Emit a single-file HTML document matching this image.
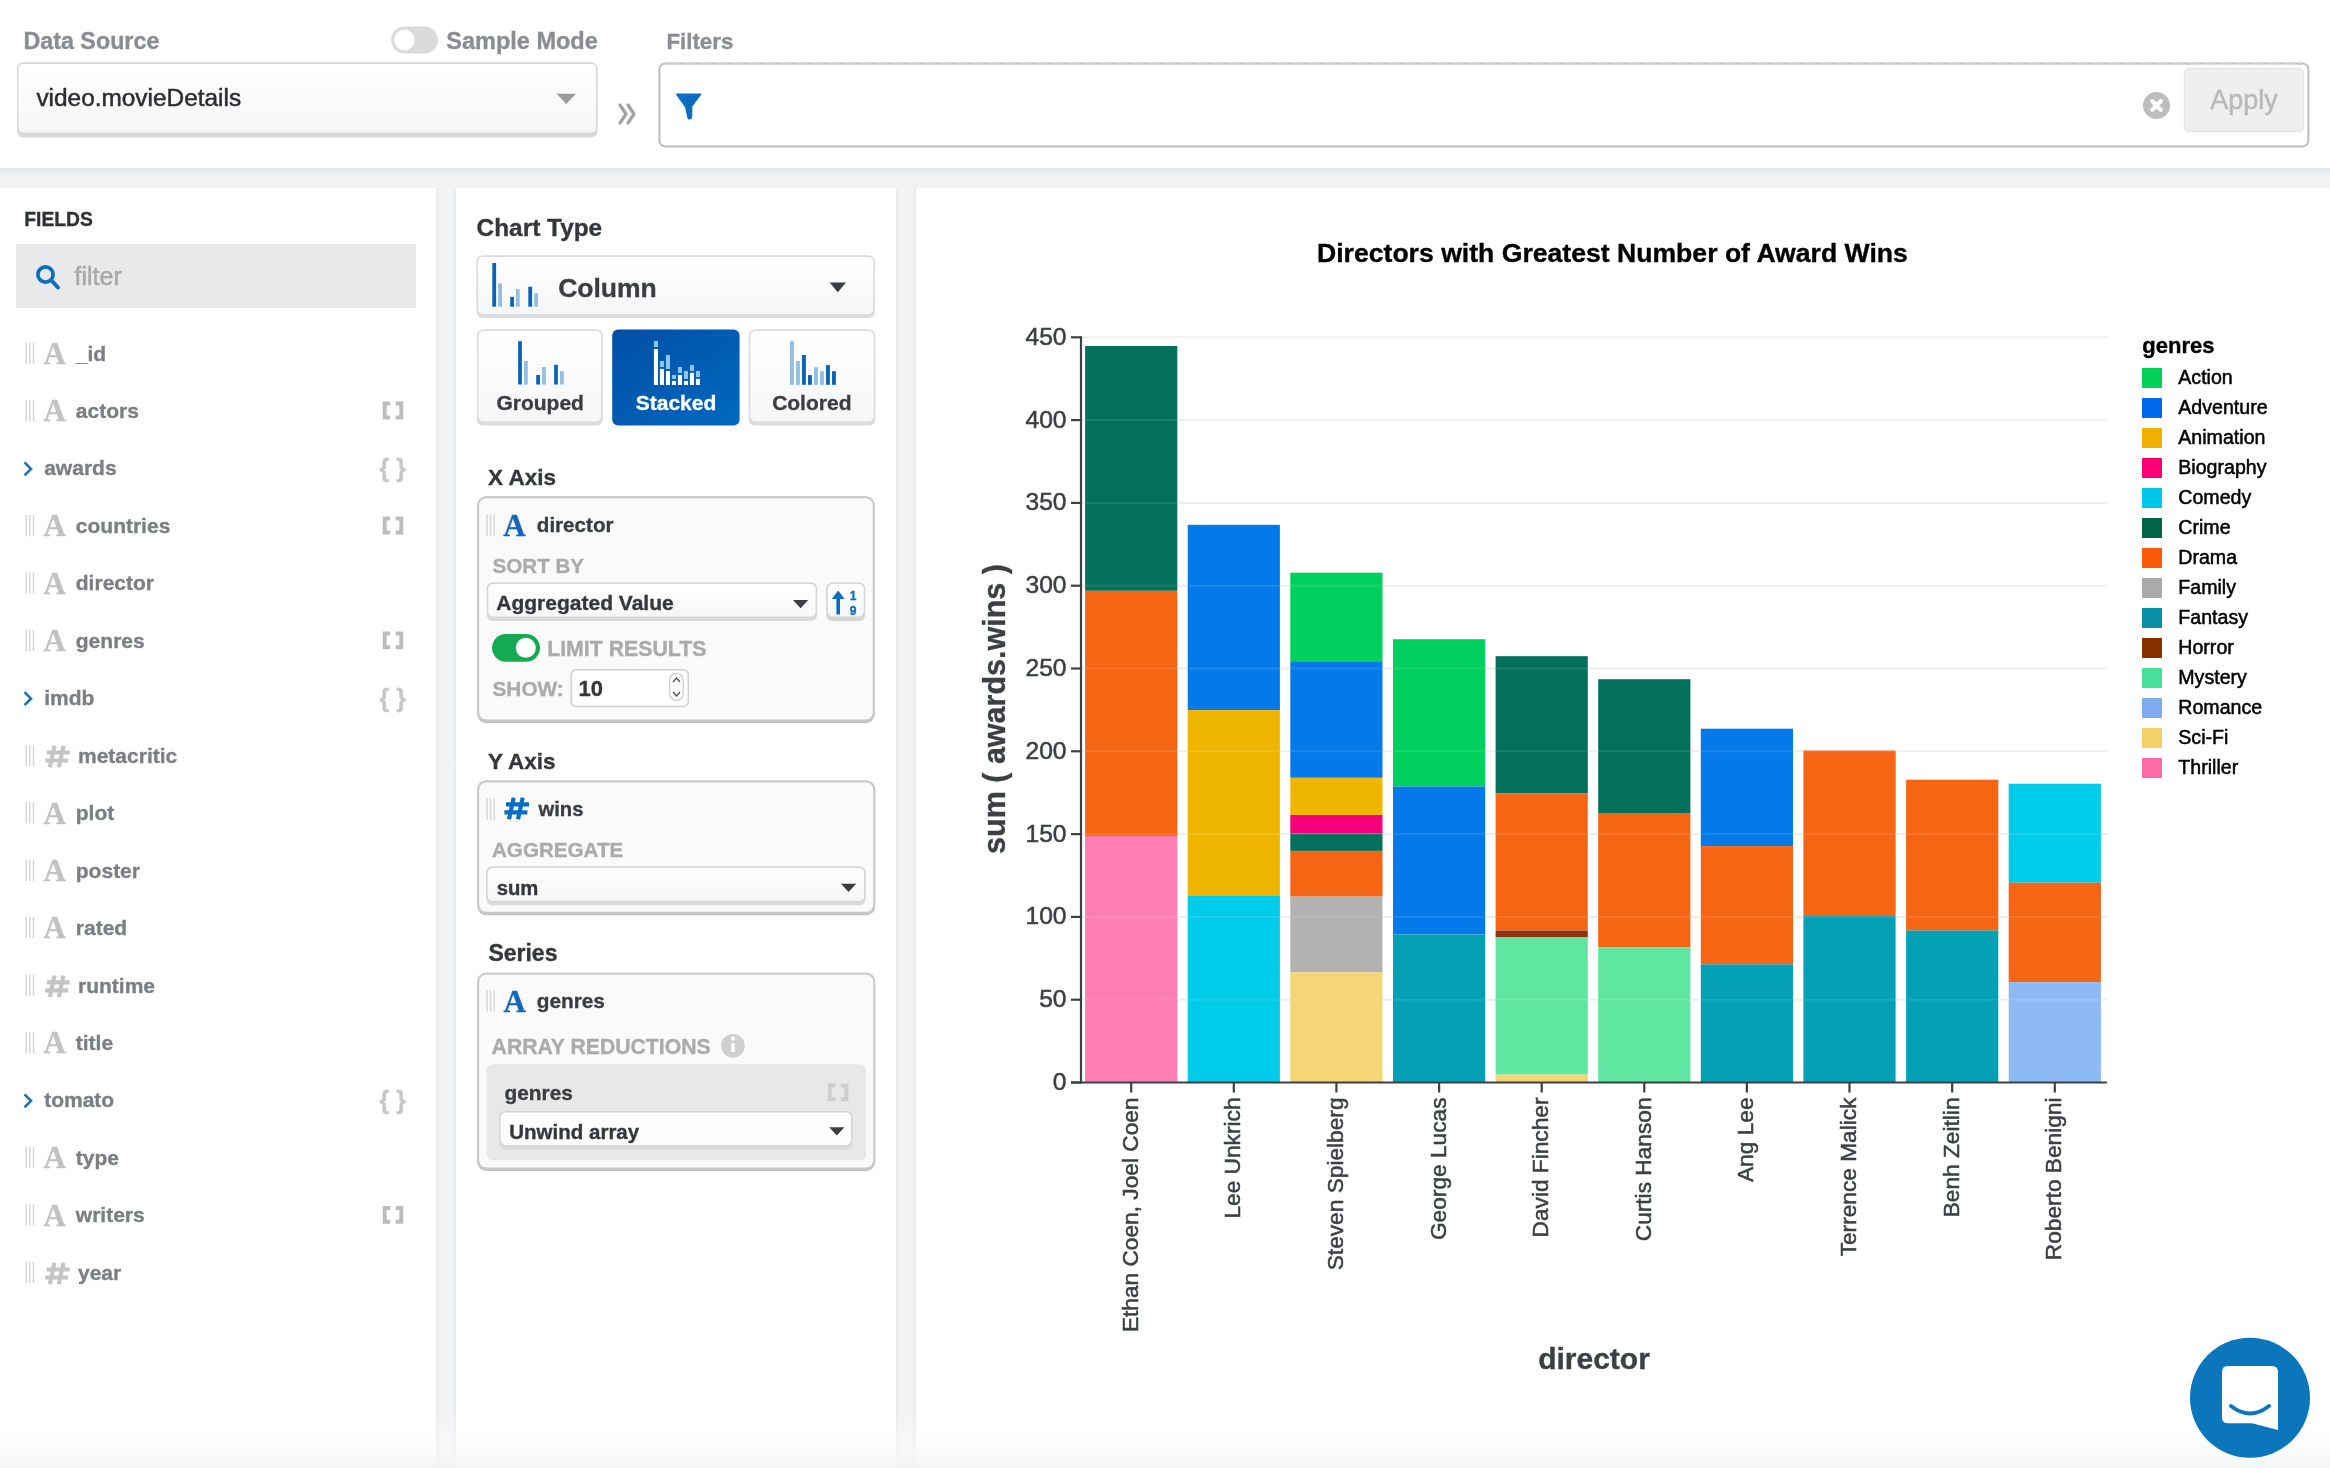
<!DOCTYPE html>
<html><head><meta charset="utf-8"><title>Charts</title>
<style>html,body{margin:0;padding:0;width:2330px;height:1468px;overflow:hidden;background:#fff;position:relative}</style>
</head><body>
<svg width="2330" height="1468" viewBox="0 0 2330 1468" style="position:absolute;left:0;top:0;will-change:transform">
<defs>
<linearGradient id="selg" x1="0" y1="0" x2="0" y2="1"><stop offset="0" stop-color="#ffffff"/><stop offset="1" stop-color="#f5f6f7"/></linearGradient>
<linearGradient id="blueg" x1="0" y1="0" x2="1" y2="1"><stop offset="0" stop-color="#0050a5"/><stop offset="1" stop-color="#0068c0"/></linearGradient>
<linearGradient id="band" x1="0" y1="0" x2="0" y2="1"><stop offset="0" stop-color="#e2e4e5"/><stop offset="0.22" stop-color="#e8eaeb"/><stop offset="0.3" stop-color="#eff1f2"/><stop offset="1" stop-color="#f2f3f4"/></linearGradient>
<linearGradient id="bot" x1="0" y1="0" x2="0" y2="1"><stop offset="0" stop-color="#ffffff" stop-opacity="0"/><stop offset="1" stop-color="#f3f4f4" stop-opacity="1"/></linearGradient>
<linearGradient id="gap" x1="0" y1="0" x2="1" y2="0"><stop offset="0" stop-color="#e9eaec"/><stop offset="0.22" stop-color="#f2f3f5"/><stop offset="0.75" stop-color="#f3f4f6"/><stop offset="1" stop-color="#eaebed"/></linearGradient>
</defs>
<rect x="0" y="0" width="2330" height="1468" fill="#f1f2f4"/>
<rect x="0" y="0" width="2330" height="168" fill="#ffffff"/>
<rect x="0" y="168" width="2330" height="20" fill="url(#band)"/>
<rect x="436" y="188" width="20" height="1280" fill="url(#gap)"/>
<rect x="896" y="188" width="20" height="1280" fill="url(#gap)"/>
<rect x="0" y="188" width="436" height="1280" fill="#fff"/>
<rect x="456" y="188" width="440" height="1280" fill="#fff" rx="3"/>
<rect x="916" y="188" width="1414" height="1280" fill="#fff" rx="3"/>
<rect x="0" y="1418" width="2330" height="50" fill="url(#bot)"/>
<text x="23.4" y="49" font-family='"Liberation Sans", sans-serif' font-size="23.3" font-weight="700" fill="#898e93" stroke="#898e93" stroke-width="0.35" text-anchor="start" >Data Source</text>
<rect x="391" y="26.5" width="47" height="27" rx="13.5" fill="#d9dbdc"/>
<circle cx="404.5" cy="40" r="10.5" fill="#fff" stroke="#e4e4e4" stroke-width="1"/>
<text x="446.3" y="48.6" font-family='"Liberation Sans", sans-serif' font-size="23.5" font-weight="700" fill="#898e93" stroke="#898e93" stroke-width="0.35" text-anchor="start" >Sample Mode</text>
<text x="666.4" y="48.6" font-family='"Liberation Sans", sans-serif' font-size="22.3" font-weight="700" fill="#898e93" stroke="#898e93" stroke-width="0.35" text-anchor="start" >Filters</text>
<rect x="17" y="62.5" width="580.5" height="75" rx="6" fill="#d8dadc"/>
<rect x="17.75" y="63.25" width="579" height="70" rx="5" fill="url(#selg)" stroke="#d9d9d9" stroke-width="1.5"/>
<text x="36.4" y="105.8" font-family='"Liberation Sans", sans-serif' font-size="24.4" font-weight="400" fill="#2a2e33" stroke="#2a2e33" stroke-width="0.5" text-anchor="start" >video.movieDetails</text>
<path d="M556.6 93.8 L576 93.8 L566.3 104 Z" fill="#9b9b9b"/>
<path d="M620 105 L626 114 L620 123 M628 105 L634 114 L628 123" fill="none" stroke="#a3a3a3" stroke-width="3.2" stroke-linecap="round" stroke-linejoin="round"/>
<rect x="659.4" y="63.4" width="1649" height="83" rx="6" fill="#fff" stroke="#bcbcbc" stroke-width="2"/>
<line x1="666" y1="63.4" x2="2302" y2="63.4" stroke="#d2d2d2" stroke-width="2.2" stroke-dasharray="13 3"/>
<path d="M676 94.5 Q675.5 93.5 677 93.5 L700.5 93.5 Q702 93.5 701 95 L692.3 106.5 L692.3 116.5 Q692.3 118.5 690.5 119.5 L689 119.5 Q688 119.5 687.5 118.5 L685.2 107.5 Z" fill="#0b6dc2"/>
<circle cx="2156.5" cy="105.5" r="13.5" fill="#bdbdbd"/>
<path d="M2152.3 101.3 L2160.7 109.7 M2160.7 101.3 L2152.3 109.7" stroke="#fff" stroke-width="4.3" stroke-linecap="round"/>
<rect x="2184.5" y="68.5" width="119" height="63" rx="5" fill="#efefef" stroke="#e3e3e3" stroke-width="1.5"/>
<text x="2244" y="109" font-family='"Liberation Sans", sans-serif' font-size="27" font-weight="400" fill="#b9b9b9" stroke="#b9b9b9" stroke-width="0.5" text-anchor="middle" >Apply</text>
<text x="24.3" y="226" font-family='"Liberation Sans", sans-serif' font-size="19.3" font-weight="700" fill="#2e3236" stroke="#2e3236" stroke-width="0.35" text-anchor="start" >FIELDS</text>
<rect x="16" y="244" width="400" height="64" fill="#e8e9eb"/>
<circle cx="45.5" cy="274.5" r="7.6" fill="none" stroke="#0b6dc2" stroke-width="3.6"/>
<line x1="51.5" y1="280.5" x2="58" y2="287.5" stroke="#0b6dc2" stroke-width="4" stroke-linecap="round"/>
<text x="74.5" y="284.7" font-family='"Liberation Sans", sans-serif' font-size="25" font-weight="400" fill="#a8a9aa" stroke="#a8a9aa" stroke-width="0.5" text-anchor="start" >filter</text>
<line x1="26.3" y1="342.5" x2="26.3" y2="363.9" stroke="#d6d6d6" stroke-width="1.5"/>
<line x1="29.900000000000002" y1="342.5" x2="29.900000000000002" y2="363.9" stroke="#d6d6d6" stroke-width="1.5"/>
<line x1="33.5" y1="342.5" x2="33.5" y2="363.9" stroke="#d6d6d6" stroke-width="1.5"/>
<text x="43.6" y="363.9" font-family='"Liberation Serif", serif' font-size="31" font-weight="700" fill="#c2c2c2" stroke="#c2c2c2" stroke-width="0.35" text-anchor="start" >A</text>
<text x="75.8" y="360.5" font-family='"Liberation Sans", sans-serif' font-size="21" font-weight="700" fill="#7b7f84" stroke="#7b7f84" stroke-width="0.35" text-anchor="start" >_id</text>
<line x1="26.3" y1="399.9" x2="26.3" y2="421.29999999999995" stroke="#d6d6d6" stroke-width="1.5"/>
<line x1="29.900000000000002" y1="399.9" x2="29.900000000000002" y2="421.29999999999995" stroke="#d6d6d6" stroke-width="1.5"/>
<line x1="33.5" y1="399.9" x2="33.5" y2="421.29999999999995" stroke="#d6d6d6" stroke-width="1.5"/>
<text x="43.6" y="421.29999999999995" font-family='"Liberation Serif", serif' font-size="31" font-weight="700" fill="#c2c2c2" stroke="#c2c2c2" stroke-width="0.35" text-anchor="start" >A</text>
<text x="75.8" y="417.9" font-family='"Liberation Sans", sans-serif' font-size="21" font-weight="700" fill="#7b7f84" stroke="#7b7f84" stroke-width="0.35" text-anchor="start" >actors</text>
<path d="M390.2 403.59999999999997 L384.7 403.59999999999997 L384.7 417.4 L390.2 417.4 M395.7 403.59999999999997 L401.3 403.59999999999997 L401.3 417.4 L395.7 417.4" stroke="#bdbdbd" stroke-width="4" fill="none"/>
<path d="M24.5 462.4 L31 468.9 L24.5 475.4" fill="none" stroke="#1d70b5" stroke-width="2.6"/>
<text x="44.2" y="475.4" font-family='"Liberation Sans", sans-serif' font-size="21" font-weight="700" fill="#7b7f84" stroke="#7b7f84" stroke-width="0.35" text-anchor="start" >awards</text>
<text x="392.7" y="476.9" font-family='"Liberation Sans", sans-serif' font-size="25" font-weight="700" fill="#c6c6c6" stroke="#c6c6c6" stroke-width="0.35" text-anchor="middle" >{ }</text>
<line x1="26.3" y1="514.9" x2="26.3" y2="536.3" stroke="#d6d6d6" stroke-width="1.5"/>
<line x1="29.900000000000002" y1="514.9" x2="29.900000000000002" y2="536.3" stroke="#d6d6d6" stroke-width="1.5"/>
<line x1="33.5" y1="514.9" x2="33.5" y2="536.3" stroke="#d6d6d6" stroke-width="1.5"/>
<text x="43.6" y="536.3" font-family='"Liberation Serif", serif' font-size="31" font-weight="700" fill="#c2c2c2" stroke="#c2c2c2" stroke-width="0.35" text-anchor="start" >A</text>
<text x="75.8" y="532.9" font-family='"Liberation Sans", sans-serif' font-size="21" font-weight="700" fill="#7b7f84" stroke="#7b7f84" stroke-width="0.35" text-anchor="start" >countries</text>
<path d="M390.2 518.6 L384.7 518.6 L384.7 532.4 L390.2 532.4 M395.7 518.6 L401.3 518.6 L401.3 532.4 L395.7 532.4" stroke="#bdbdbd" stroke-width="4" fill="none"/>
<line x1="26.3" y1="572.3" x2="26.3" y2="593.6999999999999" stroke="#d6d6d6" stroke-width="1.5"/>
<line x1="29.900000000000002" y1="572.3" x2="29.900000000000002" y2="593.6999999999999" stroke="#d6d6d6" stroke-width="1.5"/>
<line x1="33.5" y1="572.3" x2="33.5" y2="593.6999999999999" stroke="#d6d6d6" stroke-width="1.5"/>
<text x="43.6" y="593.6999999999999" font-family='"Liberation Serif", serif' font-size="31" font-weight="700" fill="#c2c2c2" stroke="#c2c2c2" stroke-width="0.35" text-anchor="start" >A</text>
<text x="75.8" y="590.3" font-family='"Liberation Sans", sans-serif' font-size="21" font-weight="700" fill="#7b7f84" stroke="#7b7f84" stroke-width="0.35" text-anchor="start" >director</text>
<line x1="26.3" y1="629.8" x2="26.3" y2="651.1999999999999" stroke="#d6d6d6" stroke-width="1.5"/>
<line x1="29.900000000000002" y1="629.8" x2="29.900000000000002" y2="651.1999999999999" stroke="#d6d6d6" stroke-width="1.5"/>
<line x1="33.5" y1="629.8" x2="33.5" y2="651.1999999999999" stroke="#d6d6d6" stroke-width="1.5"/>
<text x="43.6" y="651.1999999999999" font-family='"Liberation Serif", serif' font-size="31" font-weight="700" fill="#c2c2c2" stroke="#c2c2c2" stroke-width="0.35" text-anchor="start" >A</text>
<text x="75.8" y="647.8" font-family='"Liberation Sans", sans-serif' font-size="21" font-weight="700" fill="#7b7f84" stroke="#7b7f84" stroke-width="0.35" text-anchor="start" >genres</text>
<path d="M390.2 633.5 L384.7 633.5 L384.7 647.3 L390.2 647.3 M395.7 633.5 L401.3 633.5 L401.3 647.3 L395.7 647.3" stroke="#bdbdbd" stroke-width="4" fill="none"/>
<path d="M24.5 692.2 L31 698.7 L24.5 705.2" fill="none" stroke="#1d70b5" stroke-width="2.6"/>
<text x="44.2" y="705.2" font-family='"Liberation Sans", sans-serif' font-size="21" font-weight="700" fill="#7b7f84" stroke="#7b7f84" stroke-width="0.35" text-anchor="start" >imdb</text>
<text x="392.7" y="706.7" font-family='"Liberation Sans", sans-serif' font-size="25" font-weight="700" fill="#c6c6c6" stroke="#c6c6c6" stroke-width="0.35" text-anchor="middle" >{ }</text>
<line x1="26.3" y1="744.7" x2="26.3" y2="766.1" stroke="#d6d6d6" stroke-width="1.5"/>
<line x1="29.900000000000002" y1="744.7" x2="29.900000000000002" y2="766.1" stroke="#d6d6d6" stroke-width="1.5"/>
<line x1="33.5" y1="744.7" x2="33.5" y2="766.1" stroke="#d6d6d6" stroke-width="1.5"/>
<g transform="translate(45,745.7) scale(1.0)"><path d="M9.5 0 L4.8 21.6 M18.5 0 L13.8 21.6 M1.8 6.8 L24.8 6.8 M0.2 14.8 L23.2 14.8" stroke="#c4c4c4" stroke-width="4.2" fill="none"/></g>
<text x="78" y="762.7" font-family='"Liberation Sans", sans-serif' font-size="21" font-weight="700" fill="#7b7f84" stroke="#7b7f84" stroke-width="0.35" text-anchor="start" >metacritic</text>
<line x1="26.3" y1="802.1" x2="26.3" y2="823.5" stroke="#d6d6d6" stroke-width="1.5"/>
<line x1="29.900000000000002" y1="802.1" x2="29.900000000000002" y2="823.5" stroke="#d6d6d6" stroke-width="1.5"/>
<line x1="33.5" y1="802.1" x2="33.5" y2="823.5" stroke="#d6d6d6" stroke-width="1.5"/>
<text x="43.6" y="823.5" font-family='"Liberation Serif", serif' font-size="31" font-weight="700" fill="#c2c2c2" stroke="#c2c2c2" stroke-width="0.35" text-anchor="start" >A</text>
<text x="75.8" y="820.1" font-family='"Liberation Sans", sans-serif' font-size="21" font-weight="700" fill="#7b7f84" stroke="#7b7f84" stroke-width="0.35" text-anchor="start" >plot</text>
<line x1="26.3" y1="859.6" x2="26.3" y2="881.0" stroke="#d6d6d6" stroke-width="1.5"/>
<line x1="29.900000000000002" y1="859.6" x2="29.900000000000002" y2="881.0" stroke="#d6d6d6" stroke-width="1.5"/>
<line x1="33.5" y1="859.6" x2="33.5" y2="881.0" stroke="#d6d6d6" stroke-width="1.5"/>
<text x="43.6" y="881.0" font-family='"Liberation Serif", serif' font-size="31" font-weight="700" fill="#c2c2c2" stroke="#c2c2c2" stroke-width="0.35" text-anchor="start" >A</text>
<text x="75.8" y="877.6" font-family='"Liberation Sans", sans-serif' font-size="21" font-weight="700" fill="#7b7f84" stroke="#7b7f84" stroke-width="0.35" text-anchor="start" >poster</text>
<line x1="26.3" y1="917.0" x2="26.3" y2="938.4" stroke="#d6d6d6" stroke-width="1.5"/>
<line x1="29.900000000000002" y1="917.0" x2="29.900000000000002" y2="938.4" stroke="#d6d6d6" stroke-width="1.5"/>
<line x1="33.5" y1="917.0" x2="33.5" y2="938.4" stroke="#d6d6d6" stroke-width="1.5"/>
<text x="43.6" y="938.4" font-family='"Liberation Serif", serif' font-size="31" font-weight="700" fill="#c2c2c2" stroke="#c2c2c2" stroke-width="0.35" text-anchor="start" >A</text>
<text x="75.8" y="935.0" font-family='"Liberation Sans", sans-serif' font-size="21" font-weight="700" fill="#7b7f84" stroke="#7b7f84" stroke-width="0.35" text-anchor="start" >rated</text>
<line x1="26.3" y1="974.5" x2="26.3" y2="995.9" stroke="#d6d6d6" stroke-width="1.5"/>
<line x1="29.900000000000002" y1="974.5" x2="29.900000000000002" y2="995.9" stroke="#d6d6d6" stroke-width="1.5"/>
<line x1="33.5" y1="974.5" x2="33.5" y2="995.9" stroke="#d6d6d6" stroke-width="1.5"/>
<g transform="translate(45,975.5) scale(1.0)"><path d="M9.5 0 L4.8 21.6 M18.5 0 L13.8 21.6 M1.8 6.8 L24.8 6.8 M0.2 14.8 L23.2 14.8" stroke="#c4c4c4" stroke-width="4.2" fill="none"/></g>
<text x="78" y="992.5" font-family='"Liberation Sans", sans-serif' font-size="21" font-weight="700" fill="#7b7f84" stroke="#7b7f84" stroke-width="0.35" text-anchor="start" >runtime</text>
<line x1="26.3" y1="1031.9" x2="26.3" y2="1053.3000000000002" stroke="#d6d6d6" stroke-width="1.5"/>
<line x1="29.900000000000002" y1="1031.9" x2="29.900000000000002" y2="1053.3000000000002" stroke="#d6d6d6" stroke-width="1.5"/>
<line x1="33.5" y1="1031.9" x2="33.5" y2="1053.3000000000002" stroke="#d6d6d6" stroke-width="1.5"/>
<text x="43.6" y="1053.3000000000002" font-family='"Liberation Serif", serif' font-size="31" font-weight="700" fill="#c2c2c2" stroke="#c2c2c2" stroke-width="0.35" text-anchor="start" >A</text>
<text x="75.8" y="1049.9" font-family='"Liberation Sans", sans-serif' font-size="21" font-weight="700" fill="#7b7f84" stroke="#7b7f84" stroke-width="0.35" text-anchor="start" >title</text>
<path d="M24.5 1094.3 L31 1100.8 L24.5 1107.3" fill="none" stroke="#1d70b5" stroke-width="2.6"/>
<text x="44.2" y="1107.3" font-family='"Liberation Sans", sans-serif' font-size="21" font-weight="700" fill="#7b7f84" stroke="#7b7f84" stroke-width="0.35" text-anchor="start" >tomato</text>
<text x="392.7" y="1108.8" font-family='"Liberation Sans", sans-serif' font-size="25" font-weight="700" fill="#c6c6c6" stroke="#c6c6c6" stroke-width="0.35" text-anchor="middle" >{ }</text>
<line x1="26.3" y1="1146.8" x2="26.3" y2="1168.2" stroke="#d6d6d6" stroke-width="1.5"/>
<line x1="29.900000000000002" y1="1146.8" x2="29.900000000000002" y2="1168.2" stroke="#d6d6d6" stroke-width="1.5"/>
<line x1="33.5" y1="1146.8" x2="33.5" y2="1168.2" stroke="#d6d6d6" stroke-width="1.5"/>
<text x="43.6" y="1168.2" font-family='"Liberation Serif", serif' font-size="31" font-weight="700" fill="#c2c2c2" stroke="#c2c2c2" stroke-width="0.35" text-anchor="start" >A</text>
<text x="75.8" y="1164.8" font-family='"Liberation Sans", sans-serif' font-size="21" font-weight="700" fill="#7b7f84" stroke="#7b7f84" stroke-width="0.35" text-anchor="start" >type</text>
<line x1="26.3" y1="1204.2" x2="26.3" y2="1225.6000000000001" stroke="#d6d6d6" stroke-width="1.5"/>
<line x1="29.900000000000002" y1="1204.2" x2="29.900000000000002" y2="1225.6000000000001" stroke="#d6d6d6" stroke-width="1.5"/>
<line x1="33.5" y1="1204.2" x2="33.5" y2="1225.6000000000001" stroke="#d6d6d6" stroke-width="1.5"/>
<text x="43.6" y="1225.6000000000001" font-family='"Liberation Serif", serif' font-size="31" font-weight="700" fill="#c2c2c2" stroke="#c2c2c2" stroke-width="0.35" text-anchor="start" >A</text>
<text x="75.8" y="1222.2" font-family='"Liberation Sans", sans-serif' font-size="21" font-weight="700" fill="#7b7f84" stroke="#7b7f84" stroke-width="0.35" text-anchor="start" >writers</text>
<path d="M390.2 1207.9 L384.7 1207.9 L384.7 1221.7 L390.2 1221.7 M395.7 1207.9 L401.3 1207.9 L401.3 1221.7 L395.7 1221.7" stroke="#bdbdbd" stroke-width="4" fill="none"/>
<line x1="26.3" y1="1261.7" x2="26.3" y2="1283.1000000000001" stroke="#d6d6d6" stroke-width="1.5"/>
<line x1="29.900000000000002" y1="1261.7" x2="29.900000000000002" y2="1283.1000000000001" stroke="#d6d6d6" stroke-width="1.5"/>
<line x1="33.5" y1="1261.7" x2="33.5" y2="1283.1000000000001" stroke="#d6d6d6" stroke-width="1.5"/>
<g transform="translate(45,1262.7) scale(1.0)"><path d="M9.5 0 L4.8 21.6 M18.5 0 L13.8 21.6 M1.8 6.8 L24.8 6.8 M0.2 14.8 L23.2 14.8" stroke="#c4c4c4" stroke-width="4.2" fill="none"/></g>
<text x="78" y="1279.7" font-family='"Liberation Sans", sans-serif' font-size="21" font-weight="700" fill="#7b7f84" stroke="#7b7f84" stroke-width="0.35" text-anchor="start" >year</text>
<text x="476.6" y="235.6" font-family='"Liberation Sans", sans-serif' font-size="24.4" font-weight="700" fill="#34383c" stroke="#34383c" stroke-width="0.35" text-anchor="start" >Chart Type</text>
<rect x="476.6" y="255.4" width="398.2" height="62.6" rx="6" fill="#d9dbdd"/>
<rect x="477.35" y="256.15" width="396.7" height="58.5" rx="5.5" fill="url(#selg)" stroke="#dcdcdc" stroke-width="1.5"/>
<rect x="492.3" y="263" width="3.8" height="43.69999999999999" fill="#0b64b6"/>
<rect x="498.2" y="283.4" width="3.8" height="23.30000000000001" fill="#92bfe2"/>
<rect x="510.2" y="296.9" width="3.8" height="9.800000000000011" fill="#0b64b6"/>
<rect x="515.9" y="289.1" width="3.8" height="17.599999999999966" fill="#92bfe2"/>
<rect x="528.3" y="286.7" width="3.8" height="20.0" fill="#0b64b6"/>
<rect x="534.2" y="293.2" width="3.8" height="13.5" fill="#92bfe2"/>
<text x="558.2" y="296.9" font-family='"Liberation Sans", sans-serif' font-size="26.5" font-weight="700" fill="#3a3e42" stroke="#3a3e42" stroke-width="0.35" text-anchor="start" >Column</text>
<path d="M829.6 282.5 L846 282.5 L837.8 292.3 Z" fill="#3a3e42"/>
<rect x="477" y="329.5" width="125.6" height="96" rx="6" fill="#d9dbdd"/>
<rect x="477.75" y="330.25" width="124.1" height="92" rx="5.5" fill="url(#selg)" stroke="#dcdcdc" stroke-width="1.5"/>
<rect x="748.8" y="329.5" width="126.4" height="96" rx="6" fill="#d9dbdd"/>
<rect x="749.55" y="330.25" width="124.9" height="92" rx="5.5" fill="url(#selg)" stroke="#dcdcdc" stroke-width="1.5"/>
<rect x="612.2" y="329.5" width="127.4" height="96" rx="6" fill="url(#blueg)"/>
<text x="540.2" y="410.4" font-family='"Liberation Sans", sans-serif' font-size="21" font-weight="700" fill="#3a3e42" stroke="#3a3e42" stroke-width="0.35" text-anchor="middle" >Grouped</text>
<text x="676" y="410.4" font-family='"Liberation Sans", sans-serif' font-size="21" font-weight="700" fill="#ffffff" stroke="#ffffff" stroke-width="0.35" text-anchor="middle" >Stacked</text>
<text x="811.8" y="410.4" font-family='"Liberation Sans", sans-serif' font-size="21" font-weight="700" fill="#3a3e42" stroke="#3a3e42" stroke-width="0.35" text-anchor="middle" >Colored</text>
<rect x="518.1" y="341.2" width="3.8" height="43.30000000000001" fill="#0b64b6"/>
<rect x="524" y="361" width="3.8" height="23.5" fill="#92bfe2"/>
<rect x="536.2" y="375" width="3.8" height="9.5" fill="#0b64b6"/>
<rect x="542.1" y="367" width="3.8" height="17.5" fill="#92bfe2"/>
<rect x="554.1" y="364.8" width="3.8" height="19.69999999999999" fill="#0b64b6"/>
<rect x="560" y="371.2" width="3.8" height="13.300000000000011" fill="#92bfe2"/>
<rect x="653.9" y="341" width="4.1" height="6" fill="#8cc4ee"/>
<rect x="653.9" y="349" width="4.1" height="36" fill="#ffffff"/>
<rect x="659.9" y="360.9" width="4.1" height="6.100000000000023" fill="#8cc4ee"/>
<rect x="659.9" y="368.9" width="4.1" height="16.100000000000023" fill="#ffffff"/>
<rect x="665.9" y="354.9" width="4.1" height="14.200000000000045" fill="#8cc4ee"/>
<rect x="665.9" y="371" width="4.1" height="14" fill="#ffffff"/>
<rect x="671.9" y="374.9" width="4.1" height="4.100000000000023" fill="#8cc4ee"/>
<rect x="671.9" y="380.9" width="4.1" height="4.100000000000023" fill="#ffffff"/>
<rect x="677.9" y="367" width="4.1" height="6" fill="#8cc4ee"/>
<rect x="677.9" y="374.9" width="4.1" height="10.100000000000023" fill="#ffffff"/>
<rect x="683.9" y="371" width="4.1" height="8" fill="#8cc4ee"/>
<rect x="683.9" y="380.9" width="4.1" height="4.100000000000023" fill="#ffffff"/>
<rect x="689.9" y="365" width="4.1" height="6" fill="#8cc4ee"/>
<rect x="689.9" y="372.8" width="4.1" height="12.199999999999989" fill="#ffffff"/>
<rect x="695.9" y="371" width="4.1" height="6" fill="#8cc4ee"/>
<rect x="695.9" y="378.8" width="4.1" height="6.199999999999989" fill="#ffffff"/>
<rect x="790" y="341.2" width="3.9" height="43.60000000000002" fill="#92bfe2"/>
<rect x="796" y="361" width="3.9" height="23.80000000000001" fill="#92bfe2"/>
<rect x="802" y="355" width="3.9" height="29.80000000000001" fill="#0b64b6"/>
<rect x="808" y="375.1" width="3.9" height="9.699999999999989" fill="#0b64b6"/>
<rect x="814" y="367.2" width="3.9" height="17.600000000000023" fill="#92bfe2"/>
<rect x="820" y="371.2" width="3.9" height="13.600000000000023" fill="#92bfe2"/>
<rect x="826" y="365" width="3.9" height="19.80000000000001" fill="#0b64b6"/>
<rect x="832" y="371.2" width="3.9" height="13.600000000000023" fill="#0b64b6"/>
<text x="488.1" y="484.9" font-family='"Liberation Sans", sans-serif' font-size="22.5" font-weight="700" fill="#34383c" stroke="#34383c" stroke-width="0.35" text-anchor="start" >X Axis</text>
<rect x="477.2" y="496.3" width="397.5" height="226.8" rx="9" fill="#bfc1c3"/>
<rect x="478.2" y="497.3" width="395.5" height="223.3" rx="8" fill="#fafafa" stroke="#c9c9c9" stroke-width="2"/>
<line x1="487.0" y1="514.4" x2="487.0" y2="535.8" stroke="#d6d6d6" stroke-width="1.5"/>
<line x1="490.6" y1="514.4" x2="490.6" y2="535.8" stroke="#d6d6d6" stroke-width="1.5"/>
<line x1="494.2" y1="514.4" x2="494.2" y2="535.8" stroke="#d6d6d6" stroke-width="1.5"/>
<text x="503.3" y="535.8" font-family='"Liberation Serif", serif' font-size="31" font-weight="700" fill="#1266bf" stroke="#1266bf" stroke-width="0.35" text-anchor="start" >A</text>
<text x="536.8" y="532" font-family='"Liberation Sans", sans-serif' font-size="20.6" font-weight="700" fill="#3a3e42" stroke="#3a3e42" stroke-width="0.35" text-anchor="start" >director</text>
<text x="492.5" y="572.6" font-family='"Liberation Sans", sans-serif' font-size="20.6" font-weight="700" fill="#a9abad" stroke="#a9abad" stroke-width="0.35" text-anchor="start" >SORT BY</text>
<rect x="486.8" y="582.6" width="330.3" height="38.5" rx="6" fill="#d8dadc"/>
<rect x="487.55" y="583.35" width="328.8" height="34.0" rx="5.5" fill="url(#selg)" stroke="#d6d6d6" stroke-width="1.5"/>
<text x="496.3" y="610.2" font-family='"Liberation Sans", sans-serif' font-size="21" font-weight="700" fill="#34383c" stroke="#34383c" stroke-width="0.35" text-anchor="start" >Aggregated Value</text>
<path d="M793 600 L808.2 600 L800.6 608.3 Z" fill="#3a3e42"/>
<rect x="826.3" y="582.6" width="38.9" height="38.5" rx="6" fill="#d3d5d7"/>
<rect x="827.05" y="583.35" width="37.4" height="34" rx="5.5" fill="url(#selg)" stroke="#d6d6d6" stroke-width="1.5"/>
<path d="M838.2 614.5 L838.2 597" stroke="#0b6dc2" stroke-width="3.6" fill="none"/><path d="M831.8 599 L838.2 590.5 L844.6 599 Z" fill="#0b6dc2"/>
<text x="853.2" y="599.5" font-family='"Liberation Sans", sans-serif' font-size="12" font-weight="700" fill="#0b6dc2" stroke="#0b6dc2" stroke-width="0.35" text-anchor="middle" >1</text>
<text x="853.2" y="614.5" font-family='"Liberation Sans", sans-serif' font-size="12" font-weight="700" fill="#0b6dc2" stroke="#0b6dc2" stroke-width="0.35" text-anchor="middle" >9</text>
<rect x="492" y="634" width="48" height="27.7" rx="13.85" fill="#13aa52"/>
<circle cx="525.8" cy="647.85" r="10" fill="#fff"/>
<text x="547.2" y="656" font-family='"Liberation Sans", sans-serif' font-size="21.3" font-weight="700" fill="#a9abad" stroke="#a9abad" stroke-width="0.35" text-anchor="start" >LIMIT RESULTS</text>
<text x="492.5" y="695.7" font-family='"Liberation Sans", sans-serif' font-size="20.8" font-weight="700" fill="#a9abad" stroke="#a9abad" stroke-width="0.35" text-anchor="start" >SHOW:</text>
<rect x="571.2" y="669.7" width="117.1" height="36.7" rx="5" fill="#fff" stroke="#cfcfcf" stroke-width="1.5"/>
<text x="578.5" y="696" font-family='"Liberation Sans", sans-serif' font-size="22" font-weight="700" fill="#34383c" stroke="#34383c" stroke-width="0.35" text-anchor="start" >10</text>
<rect x="669.8" y="673.5" width="13.4" height="27" rx="6.7" fill="#fff" stroke="#c8c8c8" stroke-width="1.2"/>
<path d="M673 682 L676.5 678 L680 682 M673 692 L676.5 696 L680 692" stroke="#555" stroke-width="1.4" fill="none"/>
<text x="488" y="768.9" font-family='"Liberation Sans", sans-serif' font-size="22.5" font-weight="700" fill="#34383c" stroke="#34383c" stroke-width="0.35" text-anchor="start" >Y Axis</text>
<rect x="477.2" y="780.4" width="398" height="134.8" rx="9" fill="#bfc1c3"/>
<rect x="478.2" y="781.4" width="396" height="131.3" rx="8" fill="#fafafa" stroke="#c9c9c9" stroke-width="2"/>
<line x1="487.0" y1="798.3" x2="487.0" y2="819.6999999999999" stroke="#d6d6d6" stroke-width="1.5"/>
<line x1="490.6" y1="798.3" x2="490.6" y2="819.6999999999999" stroke="#d6d6d6" stroke-width="1.5"/>
<line x1="494.2" y1="798.3" x2="494.2" y2="819.6999999999999" stroke="#d6d6d6" stroke-width="1.5"/>
<g transform="translate(504.2,797.6) scale(1.0)"><path d="M9.5 0 L4.8 21.6 M18.5 0 L13.8 21.6 M1.8 6.8 L24.8 6.8 M0.2 14.8 L23.2 14.8" stroke="#0b6dc2" stroke-width="4.2" fill="none"/></g>
<text x="538.5" y="816.1" font-family='"Liberation Sans", sans-serif' font-size="20.2" font-weight="700" fill="#3a3e42" stroke="#3a3e42" stroke-width="0.35" text-anchor="start" >wins</text>
<text x="492" y="857.2" font-family='"Liberation Sans", sans-serif' font-size="20.6" font-weight="700" fill="#a9abad" stroke="#a9abad" stroke-width="0.35" text-anchor="start" >AGGREGATE</text>
<rect x="486.2" y="866.6" width="379.4" height="38.7" rx="6" fill="#d8dadc"/>
<rect x="486.95" y="867.35" width="377.9" height="34.2" rx="5.5" fill="url(#selg)" stroke="#d6d6d6" stroke-width="1.5"/>
<text x="496.7" y="894.5" font-family='"Liberation Sans", sans-serif' font-size="20.3" font-weight="700" fill="#34383c" stroke="#34383c" stroke-width="0.35" text-anchor="start" >sum</text>
<path d="M841 883.7 L856.2 883.7 L848.6 892.0 Z" fill="#3a3e42"/>
<text x="488.4" y="960.5" font-family='"Liberation Sans", sans-serif' font-size="23" font-weight="700" fill="#34383c" stroke="#34383c" stroke-width="0.35" text-anchor="start" >Series</text>
<rect x="477.2" y="972.8" width="398" height="198.2" rx="9" fill="#bfc1c3"/>
<rect x="478.2" y="973.8" width="396" height="194.7" rx="8" fill="#fafafa" stroke="#c9c9c9" stroke-width="2"/>
<line x1="487.0" y1="990.2" x2="487.0" y2="1011.6" stroke="#d6d6d6" stroke-width="1.5"/>
<line x1="490.6" y1="990.2" x2="490.6" y2="1011.6" stroke="#d6d6d6" stroke-width="1.5"/>
<line x1="494.2" y1="990.2" x2="494.2" y2="1011.6" stroke="#d6d6d6" stroke-width="1.5"/>
<text x="503.6" y="1011.5" font-family='"Liberation Serif", serif' font-size="31" font-weight="700" fill="#1266bf" stroke="#1266bf" stroke-width="0.35" text-anchor="start" >A</text>
<text x="536.7" y="1007.9" font-family='"Liberation Sans", sans-serif' font-size="20.8" font-weight="700" fill="#3a3e42" stroke="#3a3e42" stroke-width="0.35" text-anchor="start" >genres</text>
<text x="491.6" y="1053.9" font-family='"Liberation Sans", sans-serif' font-size="21.2" font-weight="700" fill="#a9abad" stroke="#a9abad" stroke-width="0.35" text-anchor="start" >ARRAY REDUCTIONS</text>
<circle cx="732.9" cy="1045.8" r="11.8" fill="#cfcfcf"/>
<rect x="731.2" y="1043" width="3.6" height="9" fill="#fff"/><circle cx="733" cy="1038.6" r="2.1" fill="#fff"/>
<rect x="486.6" y="1064.2" width="379.6" height="96" rx="6" fill="#e8e8e9"/>
<text x="504.6" y="1099.5" font-family='"Liberation Sans", sans-serif' font-size="20.8" font-weight="700" fill="#3a3e42" stroke="#3a3e42" stroke-width="0.35" text-anchor="start" >genres</text>
<path d="M835.3 1085.5 L829.8 1085.5 L829.8 1099.3 L835.3 1099.3 M840.8 1085.5 L846.4 1085.5 L846.4 1099.3 L840.8 1099.3" stroke="#cdcdcd" stroke-width="4" fill="none"/>
<rect x="499.2" y="1111" width="353.3" height="38.4" rx="6" fill="#d8dadc"/>
<rect x="499.95" y="1111.75" width="351.8" height="33.9" rx="5.5" fill="#fdfdfd" stroke="#d6d6d6" stroke-width="1.5"/>
<text x="509.3" y="1138.6" font-family='"Liberation Sans", sans-serif' font-size="20.5" font-weight="700" fill="#34383c" stroke="#34383c" stroke-width="0.35" text-anchor="start" >Unwind array</text>
<path d="M829.2 1127.2 L844.4000000000001 1127.2 L836.8000000000001 1135.5 Z" fill="#3a3e42"/>
<text x="1317" y="261.9" font-family='"Liberation Sans", sans-serif' font-size="26.6" font-weight="700" fill="#000" stroke="#000" stroke-width="0.35" text-anchor="start" >Directors with Greatest Number of Award Wins</text>
<line x1="1082" y1="999.7" x2="2107" y2="999.7" stroke="#ededed" stroke-width="2"/>
<line x1="1082" y1="916.9" x2="2107" y2="916.9" stroke="#ededed" stroke-width="2"/>
<line x1="1082" y1="834.1" x2="2107" y2="834.1" stroke="#ededed" stroke-width="2"/>
<line x1="1082" y1="751.3" x2="2107" y2="751.3" stroke="#ededed" stroke-width="2"/>
<line x1="1082" y1="668.5" x2="2107" y2="668.5" stroke="#ededed" stroke-width="2"/>
<line x1="1082" y1="585.7" x2="2107" y2="585.7" stroke="#ededed" stroke-width="2"/>
<line x1="1082" y1="502.9" x2="2107" y2="502.9" stroke="#ededed" stroke-width="2"/>
<line x1="1082" y1="420.1" x2="2107" y2="420.1" stroke="#ededed" stroke-width="2"/>
<line x1="1082" y1="337.3" x2="2107" y2="337.3" stroke="#ededed" stroke-width="2"/>
<rect x="1085.1" y="346" width="92.2" height="244.8" fill="#02705a"/>
<rect x="1085.1" y="590.8" width="92.2" height="245.2" fill="#f66513"/>
<rect x="1085.1" y="836" width="92.2" height="246.5" fill="#fe7db2"/>
<rect x="1187.7" y="524.8" width="92.2" height="185.3" fill="#0479ea"/>
<rect x="1187.7" y="710.1" width="92.2" height="185.9" fill="#efb600"/>
<rect x="1187.7" y="896" width="92.2" height="186.5" fill="#00cbe8"/>
<rect x="1290.3" y="572.7" width="92.2" height="89.3" fill="#00d15e"/>
<rect x="1290.3" y="662" width="92.2" height="115.8" fill="#0479ea"/>
<rect x="1290.3" y="777.8" width="92.2" height="37.2" fill="#efb600"/>
<rect x="1290.3" y="815" width="92.2" height="18.4" fill="#f5007a"/>
<rect x="1290.3" y="833.4" width="92.2" height="17.5" fill="#02705a"/>
<rect x="1290.3" y="850.9" width="92.2" height="45.7" fill="#f66513"/>
<rect x="1290.3" y="896.6" width="92.2" height="75.7" fill="#b2b2b2"/>
<rect x="1290.3" y="972.3" width="92.2" height="110.2" fill="#f4d677"/>
<rect x="1393.0" y="639.2" width="92.2" height="147.3" fill="#00d15e"/>
<rect x="1393.0" y="786.5" width="92.2" height="147.9" fill="#0479ea"/>
<rect x="1393.0" y="934.4" width="92.2" height="148.1" fill="#03a0b6"/>
<rect x="1495.6" y="656.2" width="92.2" height="137.3" fill="#02705a"/>
<rect x="1495.6" y="793.5" width="92.2" height="137.0" fill="#f66513"/>
<rect x="1495.6" y="930.5" width="92.2" height="6.5" fill="#8c3511"/>
<rect x="1495.6" y="937" width="92.2" height="137.6" fill="#5fe6a1"/>
<rect x="1495.6" y="1074.6" width="92.2" height="7.9" fill="#f4d677"/>
<rect x="1598.2" y="679.2" width="92.2" height="133.8" fill="#02705a"/>
<rect x="1598.2" y="813" width="92.2" height="134.5" fill="#f66513"/>
<rect x="1598.2" y="947.5" width="92.2" height="135.0" fill="#5fe6a1"/>
<rect x="1700.8" y="728.7" width="92.2" height="117.4" fill="#0479ea"/>
<rect x="1700.8" y="846.1" width="92.2" height="118.2" fill="#f66513"/>
<rect x="1700.8" y="964.3" width="92.2" height="118.2" fill="#03a0b6"/>
<rect x="1803.4" y="750.5" width="92.2" height="165.5" fill="#f66513"/>
<rect x="1803.4" y="916" width="92.2" height="166.5" fill="#03a0b6"/>
<rect x="1906.1" y="779.7" width="92.2" height="150.8" fill="#f66513"/>
<rect x="1906.1" y="930.5" width="92.2" height="152.0" fill="#03a0b6"/>
<rect x="2008.7" y="783.7" width="92.2" height="99.0" fill="#00cbe8"/>
<rect x="2008.7" y="882.7" width="92.2" height="99.4" fill="#f66513"/>
<rect x="2008.7" y="982.1" width="92.2" height="100.4" fill="#8ebaf4"/>
<line x1="1082" y1="999.7" x2="2107" y2="999.7" stroke="#ffffff" stroke-opacity="0.1" stroke-width="2"/>
<line x1="1082" y1="916.9" x2="2107" y2="916.9" stroke="#ffffff" stroke-opacity="0.1" stroke-width="2"/>
<line x1="1082" y1="834.1" x2="2107" y2="834.1" stroke="#ffffff" stroke-opacity="0.1" stroke-width="2"/>
<line x1="1082" y1="751.3" x2="2107" y2="751.3" stroke="#ffffff" stroke-opacity="0.1" stroke-width="2"/>
<line x1="1082" y1="668.5" x2="2107" y2="668.5" stroke="#ffffff" stroke-opacity="0.1" stroke-width="2"/>
<line x1="1082" y1="585.7" x2="2107" y2="585.7" stroke="#ffffff" stroke-opacity="0.1" stroke-width="2"/>
<line x1="1082" y1="502.9" x2="2107" y2="502.9" stroke="#ffffff" stroke-opacity="0.1" stroke-width="2"/>
<line x1="1082" y1="420.1" x2="2107" y2="420.1" stroke="#ffffff" stroke-opacity="0.1" stroke-width="2"/>
<line x1="1082" y1="337.3" x2="2107" y2="337.3" stroke="#ffffff" stroke-opacity="0.1" stroke-width="2"/>
<line x1="1081" y1="336.3" x2="1081" y2="1083.5" stroke="#3b4045" stroke-width="2.2"/>
<line x1="1071" y1="1082.5" x2="2107" y2="1082.5" stroke="#3b4045" stroke-width="2.2"/>
<line x1="1071" y1="1082.5" x2="1081" y2="1082.5" stroke="#3b4045" stroke-width="2.2"/>
<text x="1066.5" y="1090.0" font-family='"Liberation Sans", sans-serif' font-size="24.6" font-weight="400" fill="#3b4045" stroke="#3b4045" stroke-width="0.5" text-anchor="end" >0</text>
<line x1="1071" y1="999.7" x2="1081" y2="999.7" stroke="#3b4045" stroke-width="2.2"/>
<text x="1066.5" y="1007.2" font-family='"Liberation Sans", sans-serif' font-size="24.6" font-weight="400" fill="#3b4045" stroke="#3b4045" stroke-width="0.5" text-anchor="end" >50</text>
<line x1="1071" y1="916.9" x2="1081" y2="916.9" stroke="#3b4045" stroke-width="2.2"/>
<text x="1066.5" y="924.4" font-family='"Liberation Sans", sans-serif' font-size="24.6" font-weight="400" fill="#3b4045" stroke="#3b4045" stroke-width="0.5" text-anchor="end" >100</text>
<line x1="1071" y1="834.1" x2="1081" y2="834.1" stroke="#3b4045" stroke-width="2.2"/>
<text x="1066.5" y="841.6" font-family='"Liberation Sans", sans-serif' font-size="24.6" font-weight="400" fill="#3b4045" stroke="#3b4045" stroke-width="0.5" text-anchor="end" >150</text>
<line x1="1071" y1="751.3" x2="1081" y2="751.3" stroke="#3b4045" stroke-width="2.2"/>
<text x="1066.5" y="758.8" font-family='"Liberation Sans", sans-serif' font-size="24.6" font-weight="400" fill="#3b4045" stroke="#3b4045" stroke-width="0.5" text-anchor="end" >200</text>
<line x1="1071" y1="668.5" x2="1081" y2="668.5" stroke="#3b4045" stroke-width="2.2"/>
<text x="1066.5" y="676.0" font-family='"Liberation Sans", sans-serif' font-size="24.6" font-weight="400" fill="#3b4045" stroke="#3b4045" stroke-width="0.5" text-anchor="end" >250</text>
<line x1="1071" y1="585.7" x2="1081" y2="585.7" stroke="#3b4045" stroke-width="2.2"/>
<text x="1066.5" y="593.2" font-family='"Liberation Sans", sans-serif' font-size="24.6" font-weight="400" fill="#3b4045" stroke="#3b4045" stroke-width="0.5" text-anchor="end" >300</text>
<line x1="1071" y1="502.9" x2="1081" y2="502.9" stroke="#3b4045" stroke-width="2.2"/>
<text x="1066.5" y="510.4" font-family='"Liberation Sans", sans-serif' font-size="24.6" font-weight="400" fill="#3b4045" stroke="#3b4045" stroke-width="0.5" text-anchor="end" >350</text>
<line x1="1071" y1="420.1" x2="1081" y2="420.1" stroke="#3b4045" stroke-width="2.2"/>
<text x="1066.5" y="427.6" font-family='"Liberation Sans", sans-serif' font-size="24.6" font-weight="400" fill="#3b4045" stroke="#3b4045" stroke-width="0.5" text-anchor="end" >400</text>
<line x1="1071" y1="337.3" x2="1081" y2="337.3" stroke="#3b4045" stroke-width="2.2"/>
<text x="1066.5" y="344.8" font-family='"Liberation Sans", sans-serif' font-size="24.6" font-weight="400" fill="#3b4045" stroke="#3b4045" stroke-width="0.5" text-anchor="end" >450</text>
<line x1="1131.2" y1="1082.5" x2="1131.2" y2="1092.5" stroke="#3b4045" stroke-width="2.2"/>
<text transform="translate(1137.7,1097.5) rotate(-90)" font-family='"Liberation Sans", sans-serif' font-size="22.7" fill="#3b4045" stroke="#3b4045" stroke-width="0.5" text-anchor="end">Ethan Coen, Joel Coen</text>
<line x1="1233.8" y1="1082.5" x2="1233.8" y2="1092.5" stroke="#3b4045" stroke-width="2.2"/>
<text transform="translate(1240.3,1097.5) rotate(-90)" font-family='"Liberation Sans", sans-serif' font-size="22.7" fill="#3b4045" stroke="#3b4045" stroke-width="0.5" text-anchor="end">Lee Unkrich</text>
<line x1="1336.4" y1="1082.5" x2="1336.4" y2="1092.5" stroke="#3b4045" stroke-width="2.2"/>
<text transform="translate(1342.9,1097.5) rotate(-90)" font-family='"Liberation Sans", sans-serif' font-size="22.7" fill="#3b4045" stroke="#3b4045" stroke-width="0.5" text-anchor="end">Steven Spielberg</text>
<line x1="1439.1" y1="1082.5" x2="1439.1" y2="1092.5" stroke="#3b4045" stroke-width="2.2"/>
<text transform="translate(1445.6,1097.5) rotate(-90)" font-family='"Liberation Sans", sans-serif' font-size="22.7" fill="#3b4045" stroke="#3b4045" stroke-width="0.5" text-anchor="end">George Lucas</text>
<line x1="1541.7" y1="1082.5" x2="1541.7" y2="1092.5" stroke="#3b4045" stroke-width="2.2"/>
<text transform="translate(1548.2,1097.5) rotate(-90)" font-family='"Liberation Sans", sans-serif' font-size="22.7" fill="#3b4045" stroke="#3b4045" stroke-width="0.5" text-anchor="end">David Fincher</text>
<line x1="1644.3" y1="1082.5" x2="1644.3" y2="1092.5" stroke="#3b4045" stroke-width="2.2"/>
<text transform="translate(1650.8,1097.5) rotate(-90)" font-family='"Liberation Sans", sans-serif' font-size="22.7" fill="#3b4045" stroke="#3b4045" stroke-width="0.5" text-anchor="end">Curtis Hanson</text>
<line x1="1746.9" y1="1082.5" x2="1746.9" y2="1092.5" stroke="#3b4045" stroke-width="2.2"/>
<text transform="translate(1753.4,1097.5) rotate(-90)" font-family='"Liberation Sans", sans-serif' font-size="22.7" fill="#3b4045" stroke="#3b4045" stroke-width="0.5" text-anchor="end">Ang Lee</text>
<line x1="1849.5" y1="1082.5" x2="1849.5" y2="1092.5" stroke="#3b4045" stroke-width="2.2"/>
<text transform="translate(1856.0,1097.5) rotate(-90)" font-family='"Liberation Sans", sans-serif' font-size="22.7" fill="#3b4045" stroke="#3b4045" stroke-width="0.5" text-anchor="end">Terrence Malick</text>
<line x1="1952.2" y1="1082.5" x2="1952.2" y2="1092.5" stroke="#3b4045" stroke-width="2.2"/>
<text transform="translate(1958.7,1097.5) rotate(-90)" font-family='"Liberation Sans", sans-serif' font-size="22.7" fill="#3b4045" stroke="#3b4045" stroke-width="0.5" text-anchor="end">Benh Zeitlin</text>
<line x1="2054.8" y1="1082.5" x2="2054.8" y2="1092.5" stroke="#3b4045" stroke-width="2.2"/>
<text transform="translate(2061.3,1097.5) rotate(-90)" font-family='"Liberation Sans", sans-serif' font-size="22.7" fill="#3b4045" stroke="#3b4045" stroke-width="0.5" text-anchor="end">Roberto Benigni</text>
<text x="1594" y="1368.9" font-family='"Liberation Sans", sans-serif' font-size="30" font-weight="700" fill="#3b4045" stroke="#3b4045" stroke-width="0.35" text-anchor="middle" >director</text>
<text transform="translate(1004.6,709) rotate(-90)" font-family='"Liberation Sans", sans-serif' font-size="30.5" font-weight="700" fill="#3b4045" stroke="#3b4045" stroke-width="0.35" text-anchor="middle">sum ( awards.wins )</text>
<text x="2142.3" y="353.2" font-family='"Liberation Sans", sans-serif' font-size="22" font-weight="700" fill="#000" stroke="#000" stroke-width="0.35" text-anchor="start" >genres</text>
<rect x="2142" y="368" width="20" height="20" fill="#02d15a"/>
<text x="2178.3" y="383.8" font-family='"Liberation Sans", sans-serif' font-size="19.6" font-weight="400" fill="#000" stroke="#000" stroke-width="0.5" text-anchor="start" >Action</text>
<rect x="2142" y="398" width="20" height="20" fill="#0068ee"/>
<text x="2178.3" y="413.8" font-family='"Liberation Sans", sans-serif' font-size="19.6" font-weight="400" fill="#000" stroke="#000" stroke-width="0.5" text-anchor="start" >Adventure</text>
<rect x="2142" y="428" width="20" height="20" fill="#efb000"/>
<text x="2178.3" y="443.8" font-family='"Liberation Sans", sans-serif' font-size="19.6" font-weight="400" fill="#000" stroke="#000" stroke-width="0.5" text-anchor="start" >Animation</text>
<rect x="2142" y="458" width="20" height="20" fill="#fb0075"/>
<text x="2178.3" y="473.8" font-family='"Liberation Sans", sans-serif' font-size="19.6" font-weight="400" fill="#000" stroke="#000" stroke-width="0.5" text-anchor="start" >Biography</text>
<rect x="2142" y="488" width="20" height="20" fill="#00c6ea"/>
<text x="2178.3" y="503.8" font-family='"Liberation Sans", sans-serif' font-size="19.6" font-weight="400" fill="#000" stroke="#000" stroke-width="0.5" text-anchor="start" >Comedy</text>
<rect x="2142" y="518" width="20" height="20" fill="#03644a"/>
<text x="2178.3" y="533.8" font-family='"Liberation Sans", sans-serif' font-size="19.6" font-weight="400" fill="#000" stroke="#000" stroke-width="0.5" text-anchor="start" >Crime</text>
<rect x="2142" y="548" width="20" height="20" fill="#fc5a0b"/>
<text x="2178.3" y="563.8" font-family='"Liberation Sans", sans-serif' font-size="19.6" font-weight="400" fill="#000" stroke="#000" stroke-width="0.5" text-anchor="start" >Drama</text>
<rect x="2142" y="578" width="20" height="20" fill="#aaaaaa"/>
<text x="2178.3" y="593.8" font-family='"Liberation Sans", sans-serif' font-size="19.6" font-weight="400" fill="#000" stroke="#000" stroke-width="0.5" text-anchor="start" >Family</text>
<rect x="2142" y="608" width="20" height="20" fill="#0a8fa9"/>
<text x="2178.3" y="623.8" font-family='"Liberation Sans", sans-serif' font-size="19.6" font-weight="400" fill="#000" stroke="#000" stroke-width="0.5" text-anchor="start" >Fantasy</text>
<rect x="2142" y="638" width="20" height="20" fill="#883100"/>
<text x="2178.3" y="653.8" font-family='"Liberation Sans", sans-serif' font-size="19.6" font-weight="400" fill="#000" stroke="#000" stroke-width="0.5" text-anchor="start" >Horror</text>
<rect x="2142" y="668" width="20" height="20" fill="#48e19c"/>
<text x="2178.3" y="683.8" font-family='"Liberation Sans", sans-serif' font-size="19.6" font-weight="400" fill="#000" stroke="#000" stroke-width="0.5" text-anchor="start" >Mystery</text>
<rect x="2142" y="698" width="20" height="20" fill="#81abf1"/>
<text x="2178.3" y="713.8" font-family='"Liberation Sans", sans-serif' font-size="19.6" font-weight="400" fill="#000" stroke="#000" stroke-width="0.5" text-anchor="start" >Romance</text>
<rect x="2142" y="728" width="20" height="20" fill="#f3d168"/>
<text x="2178.3" y="743.8" font-family='"Liberation Sans", sans-serif' font-size="19.6" font-weight="400" fill="#000" stroke="#000" stroke-width="0.5" text-anchor="start" >Sci-Fi</text>
<rect x="2142" y="758" width="20" height="20" fill="#fd6aa6"/>
<text x="2178.3" y="773.8" font-family='"Liberation Sans", sans-serif' font-size="19.6" font-weight="400" fill="#000" stroke="#000" stroke-width="0.5" text-anchor="start" >Thriller</text>
<circle cx="2250" cy="1397.8" r="60" fill="#0c76bd"/>
<path d="M2228 1366 L2272 1366 Q2278 1366 2278 1372 L2278 1430 L2252 1423.3 L2228 1423.3 Q2222 1423.3 2222 1417.3 L2222 1372 Q2222 1366 2228 1366 Z" fill="#fff"/>
<path d="M2231 1406 Q2250 1421 2269 1406" fill="none" stroke="#0c76bd" stroke-width="4" stroke-linecap="round"/>
</svg>
</body></html>
